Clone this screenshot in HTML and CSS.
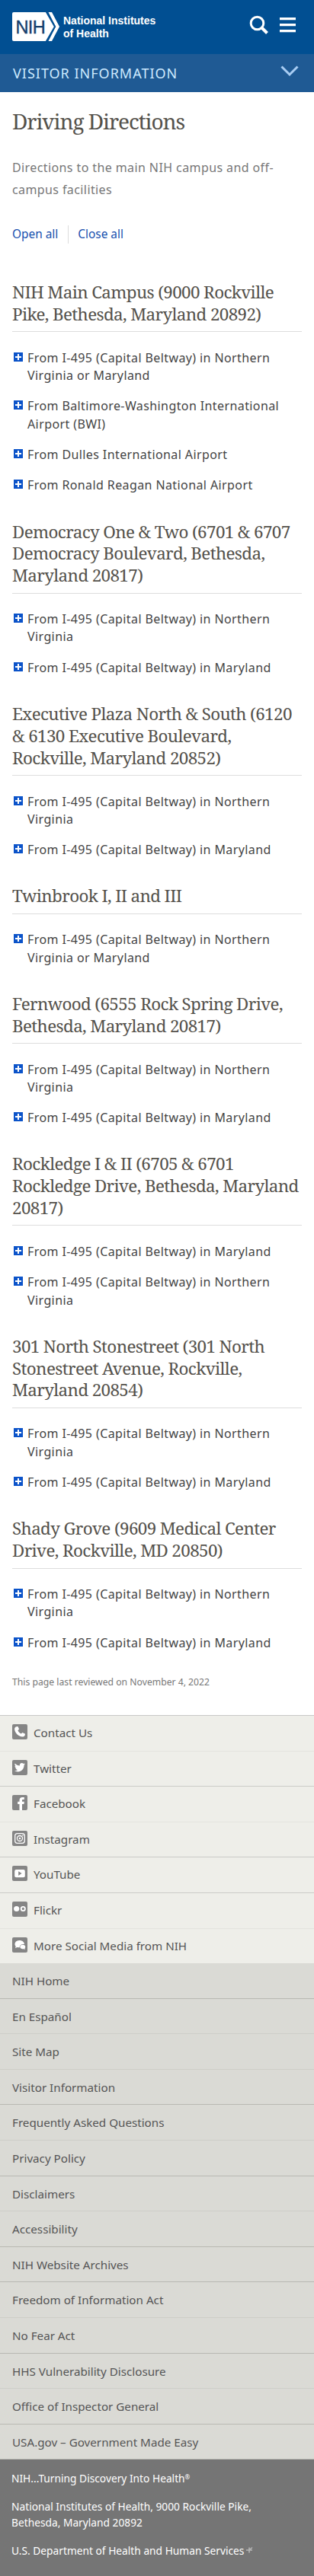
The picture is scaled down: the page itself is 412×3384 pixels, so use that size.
FILE: index.html
```html
<!DOCTYPE html>
<html lang="en">
<head>
<meta charset="utf-8">
<meta name="viewport" content="width=device-width, initial-scale=1">
<title>Driving Directions | National Institutes of Health</title>
<link rel="stylesheet" href="styles.css">
</head>
<body>
<header class="site-header">
  <a class="brand" href="#">
    <svg class="brand-mark" width="62" height="38" viewBox="0 0 62 38" aria-hidden="true">
      <path d="M2 0h42.5l12 19-12 19H2a2 2 0 0 1-2-2V2a2 2 0 0 1 2-2z" fill="#fff"/>
      <path d="M47.5 0H52l10 19-10 19h-4.500l9.500-19z" fill="#fff"/>
      <path d="M44.600-1l11.400 20-11.400 20" fill="none" stroke="#014f92" stroke-width="2.200"/>
      <text class="mark-text" x="4.500" y="27.500">NIH</text>
    </svg>
    <span class="brand-name">National Institutes<br>of Health</span>
  </a>
  <div class="tools">
    <svg width="26" height="26" viewBox="0 0 26 26" fill="none" stroke="#fff" aria-label="Search"><circle cx="10.500" cy="10.500" r="8.300" stroke-width="3"/><path d="M16.500 16.500l7 7" stroke-width="4"/></svg>
    <svg width="22" height="20" viewBox="0 0 22 20" fill="#fff" aria-label="Menu"><path d="M0 0h21v3.200H0zM0 8h21v3.200H0zM0 16h21v3.200H0z"/></svg>
  </div>
</header>
<nav class="section-bar">
  <span>VISITOR INFORMATION</span>
  <svg width="24" height="15" viewBox="0 0 24 15" fill="none" stroke="#a9cdf3" stroke-width="3" aria-hidden="true"><path d="M1.500 1.500L12 12 22.500 1.500"/></svg>
</nav>
<main class="content">
  <h1>Driving Directions</h1>
  <p class="lead">Directions to the main NIH campus and off-<br>campus facilities</p>
  <div class="toggles"><a href="#">Open all</a><a href="#">Close all</a></div>

  <section>
    <h2>NIH Main Campus (9000 Rockville<br>Pike, Bethesda, Maryland 20892)</h2>
    <ul class="routes">
      <li>From I-495 (Capital Beltway) in Northern<br>Virginia or Maryland</li>
      <li>From Baltimore-Washington International<br>Airport (BWI)</li>
      <li>From Dulles International Airport</li>
      <li>From Ronald Reagan National Airport</li>
    </ul>
  </section>
  <section>
    <h2>Democracy One &amp; Two (6701 &amp; 6707<br>Democracy Boulevard, Bethesda,<br>Maryland 20817)</h2>
    <ul class="routes">
      <li>From I-495 (Capital Beltway) in Northern<br>Virginia</li>
      <li>From I-495 (Capital Beltway) in Maryland</li>
    </ul>
  </section>
  <section>
    <h2>Executive Plaza North &amp; South (6120<br>&amp; 6130 Executive Boulevard,<br>Rockville, Maryland 20852)</h2>
    <ul class="routes">
      <li>From I-495 (Capital Beltway) in Northern<br>Virginia</li>
      <li>From I-495 (Capital Beltway) in Maryland</li>
    </ul>
  </section>
  <section>
    <h2>Twinbrook I, II and III</h2>
    <ul class="routes">
      <li>From I-495 (Capital Beltway) in Northern<br>Virginia or Maryland</li>
    </ul>
  </section>
  <section>
    <h2>Fernwood (6555 Rock Spring Drive,<br>Bethesda, Maryland 20817)</h2>
    <ul class="routes">
      <li>From I-495 (Capital Beltway) in Northern<br>Virginia</li>
      <li>From I-495 (Capital Beltway) in Maryland</li>
    </ul>
  </section>
  <section>
    <h2>Rockledge I &amp; II (6705 &amp; 6701<br>Rockledge Drive, Bethesda, Maryland<br>20817)</h2>
    <ul class="routes">
      <li>From I-495 (Capital Beltway) in Maryland</li>
      <li>From I-495 (Capital Beltway) in Northern<br>Virginia</li>
    </ul>
  </section>
  <section>
    <h2>301 North Stonestreet (301 North<br>Stonestreet Avenue, Rockville,<br>Maryland 20854)</h2>
    <ul class="routes">
      <li>From I-495 (Capital Beltway) in Northern<br>Virginia</li>
      <li>From I-495 (Capital Beltway) in Maryland</li>
    </ul>
  </section>
  <section>
    <h2>Shady Grove (9609 Medical Center<br>Drive, Rockville, MD 20850)</h2>
    <ul class="routes">
      <li>From I-495 (Capital Beltway) in Northern<br>Virginia</li>
      <li>From I-495 (Capital Beltway) in Maryland</li>
    </ul>
  </section>
  <p class="reviewed">This page last reviewed on November 4, 2022</p>
</main>
<footer>
  <ul class="links social">
    <li class="soft"><svg viewBox="0 0 20 20"><rect width="20" height="20" rx="2"/><path d="M5.200 3.200L7.500 3l1.600 3.600-1.700 1.700c.8 1.800 2.300 3.200 4.300 4.200l1.800-1.600 3.500 1.800c.1 2.200-1.300 3.600-3.300 3.700C8.300 16.400 3 11 3.100 6.200c0-1.400.8-2.500 2.100-3z" class="w"/></svg>Contact Us</li>
    <li><svg viewBox="0 0 20 20"><rect width="20" height="20" rx="2"/><path class="w" d="M3.700 4.600c1.700 1.900 3.700 2.900 6.200 3-.5-2.300 1-3.700 2.700-3.700 1 0 1.600.4 2.200 1l1.800-.7-1.100 1.600 1.500-.3-1.500 1.500c.2 4.800-3.500 8.400-7.900 8.400-1.800 0-3.300-.5-4.600-1.300 1.600.1 3-.3 4.100-1.200-1.400-.1-2.200-.8-2.600-1.900h1.200C4.200 10.500 3.500 9.500 3.500 8l1.200.3C3.300 7.200 3.100 5.900 3.700 4.600z"/></svg>Twitter</li>
    <li class="soft"><svg viewBox="0 0 20 20"><rect width="20" height="20" rx="2"/><path class="w" d="M9.500 20v-8H7.200V8.800h2.300V7c0-2.700 1.500-4 3.800-4h2.500v3.100h-1.600c-1 0-1.200.5-1.200 1.200v1.500h2.800l-.4 3.200H13v8z"/></svg>Facebook</li>
    <li><svg viewBox="0 0 20 20"><rect width="20" height="20" rx="2"/><g class="s"><rect x="3.700" y="3.700" width="12.600" height="12.600" rx="3"/><circle cx="10" cy="10" r="3.500"/></g><circle class="w" cx="10" cy="10" r="1.200"/><circle class="w" cx="13.900" cy="6.100" r=".8"/></svg>Instagram</li>
    <li><svg viewBox="0 0 20 20"><rect width="20" height="20" rx="2"/><rect class="w" x="3.200" y="5" width="13.600" height="10.300" rx="2"/><path d="M8.200 7.300v5.600l4.300-2.800z"/></svg>YouTube</li>
    <li class="soft"><svg viewBox="0 0 20 20"><rect width="20" height="20" rx="2"/><circle class="w" cx="5.700" cy="9.500" r="3.600"/><circle cx="14.300" cy="9.500" r="2.600" fill="none" stroke="#fff" stroke-width="1.900"/></svg>Flickr</li>
    <li><svg viewBox="0 0 20 20"><rect width="20" height="20" rx="2"/><path class="w" d="M9.500 4c3.800 0 6.400 2.200 6.400 5-3.500-.6-6.300 1.200-6.300 4.200-1.300.1-2.300 0-3.100-.3l-2.500 1.300.7-2.300C1.700 8.500 4.500 4 9.500 4z"/><path class="w" d="M13.700 9.800c2.200 0 3.600 1.200 3.600 2.800 0 .8-.3 1.400-.8 1.900l.4 1.500-1.700-.7c-3 .4-4.900-.8-4.900-2.700 0-1.600 1.300-2.800 3.400-2.800z"/></svg>More Social Media from NIH</li>
  </ul>
  <ul class="links site">
    <li>NIH Home</li>
    <li class="soft">En Español</li>
    <li class="soft">Site Map</li>
    <li>Visitor Information</li>
    <li class="soft">Frequently Asked Questions</li>
    <li>Privacy Policy</li>
    <li class="soft">Disclaimers</li>
    <li>Accessibility</li>
    <li>NIH Website Archives</li>
    <li class="soft">Freedom of Information Act</li>
    <li>No Fear Act</li>
    <li class="soft">HHS Vulnerability Disclosure</li>
    <li>Office of Inspector General</li>
    <li>USA.gov – Government Made Easy</li>
  </ul>
  <div class="legal">
    <p>NIH...Turning Discovery Into Health<span class="reg">®</span></p>
    <p>National Institutes of Health, 9000 Rockville Pike,<br>Bethesda, Maryland 20892</p>
    <p>U.S. Department of Health and Human Services<svg width="12" height="11" viewBox="0 0 12 11" aria-hidden="true"><path d="M2 5h8M6 1.500v7M6 5l4-3.500" fill="none" stroke="#b5b5b5" stroke-width="1.600"/></svg></p>
  </div>
</footer>
</body>
</html>
```

FILE: styles.css
```css
* { box-sizing: border-box; }
body {
  margin: 0;
  background: #fff;
  color: #444;
  font: 16px/23.2px "Noto Sans", sans-serif;
  white-space: nowrap;
}
a { color: inherit; text-decoration: none; }
ul, h1, h2, p { margin: 0; padding: 0; list-style: none; font-weight: 400; }

.site-header {
  display: flex;
  justify-content: space-between;
  height: 71px;
  padding: 16px 23px 0 16px;
  background: #014f92;
  color: #fff;
}
.brand { display: flex; gap: 5px; }
.brand-mark { display: block; }
.mark-text { font: 23.500px "Liberation Sans", sans-serif; fill: #17406d; stroke: #17406d; stroke-width: .4; letter-spacing: -.6px; }
.brand-name { font: bold 14px/17px "Liberation Sans", sans-serif; padding-top: 2.500px; }
.tools { display: flex; gap: 14px; padding-top: 4px; }
.tools svg + svg { margin-top: 2.500px; }

.section-bar {
  display: flex;
  justify-content: space-between;
  height: 50px;
  padding: 0 20px 0 17px;
  background: #1f5a94;
  color: #cdeaff;
  font-size: 18px;
  line-height: 50px;
  letter-spacing: 1px;
}
.section-bar svg { margin-top: 15px; }

.content { height: 2132px; padding: 20px 16px 0; }
h1, h2 { font-family: "Noto Serif", "Droid Serif", "DejaVu Serif Condensed", "DejaVu Serif", serif; color: #54514b; }
h1 { font-size: 28px; line-height: 36px; letter-spacing: -1.050px; }
.lead { margin-top: 29.400px; line-height: 28.800px; letter-spacing: .4px; color: #777; }
.toggles { display: flex; margin-top: 31.600px; line-height: 24px; font-size: 15.400px; color: #164fae; }
.toggles a + a { margin-left: 13px; padding-left: 12px; border-left: 1px solid #ddd; }

section { margin-top: 34.950px; }
.toggles + section { margin-top: 50.400px; }
h2 {
  margin-bottom: 22.600px;
  padding-bottom: 7.700px;
  border-bottom: 1px solid #ddd;
  font-size: 22.400px;
  line-height: 28.800px;
  letter-spacing: -.630px;
}
.routes { display: flex; flex-direction: column; gap: 17.200px; }
.routes li { position: relative; padding-left: 20px; letter-spacing: .4px; }
.routes li::before {
  content: "";
  position: absolute;
  left: 2px;
  top: 4px;
  width: 12px;
  height: 12px;
  background:
    linear-gradient(#fff, #fff) center / 8px 2px no-repeat,
    linear-gradient(#fff, #fff) center / 2px 8px no-repeat,
    #0b53c9;
}
.reviewed { margin-top: 30.700px; font-size: 12.200px; line-height: 18px; color: #777; }

.links { font-size: 15.200px; color: #555; }
.links li { display: flex; height: 46.600px; padding: 0 16px; line-height: 45.600px; }
.social { background: #eeeee9; border-top: 1px solid #c8c8c6; height: 326px; }
.social li { border-bottom: 1px solid #cbcbc7; }
.social li.soft { border-bottom-color: #e3e3de; }
.social li:last-child { border-bottom: 0; }
.social svg { width: 20px; height: 20px; margin: 11px 8px 0 0; fill: #858585; }
.social .w { fill: #fff; }
.social .s { fill: none; stroke: #fff; stroke-width: 1.300; }
.site { background: #dadad5; }
.site li { border-bottom: 1px solid #b8b8b2; line-height: 47px; }
.site li.soft { border-bottom-color: #cecec8; }

.legal {
  display: flex;
  flex-direction: column;
  gap: 16.600px;
  height: 152.600px;
  padding: 14.600px 15px 0;
  background: #757575;
  color: #fff;
  font-size: 13.750px;
  line-height: 20.800px;
}
.reg { font-size: 8px; vertical-align: 4px; line-height: 0; }
.legal svg { margin-left: 1px; }
```
